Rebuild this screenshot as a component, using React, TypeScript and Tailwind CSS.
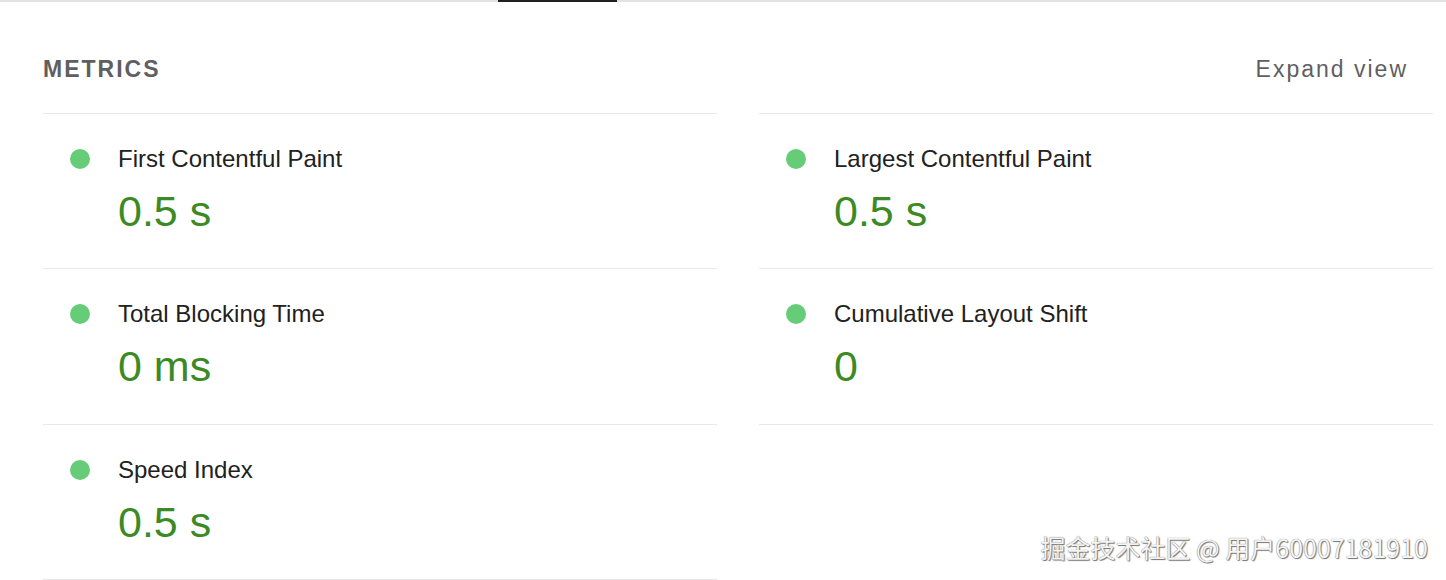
// Lighthouse-style metrics summary

type Metric = {
    label: string;
    value: string;
};

const metrics: Metric[] = [
    { label: "First Contentful Paint", value: "0.5 s" },
    { label: "Largest Contentful Paint", value: "0.5 s" },
    { label: "Total Blocking Time", value: "0 ms" },
    { label: "Cumulative Layout Shift", value: "0" },
    { label: "Speed Index", value: "0.5 s" },
];

function MetricItem({ metric, first, last }: { metric: Metric; first: boolean; last: boolean }) {
    return (
        <div
            className={
                "flex border-b border-[#e8e8e8] pl-[27px] pt-[31px] " +
                (first ? "border-t " : "") +
                (last ? "h-[155px]" : "h-[156px]")
            }
        >
            <span className="mt-[4px] h-[20px] w-[20px] shrink-0 rounded-full bg-[#66cc77]" />
            <div className="ml-[28px] flex flex-col">
                <span className="text-[24px] leading-[28px] text-[#212121]">
                    {metric.label}
                </span>
                <span className="mt-[14px] text-[43px] leading-[48px] text-[#3c8a23]">
                    {metric.value}
                </span>
            </div>
        </div>
    );
}

export default function App() {
    return (
        <div className="relative h-[580px] w-full overflow-hidden bg-white font-['Liberation_Sans',Arial,sans-serif]">
            {/* Tab bar underline */}
            <div className="flex h-[2px] w-full bg-[#e2e2e2]">
                <div className="ml-[498px] h-[2px] w-[119px] bg-[#202020]" />
            </div>

            <div className="pl-[43px] pr-[13px]">
                {/* Header */}
                <div className="flex items-center justify-between pr-[25px] pt-[54px] pb-[31px]">
                    <span className="text-[23px] font-bold leading-[26px] tracking-[2px] text-[#5f5f5f]">
                        METRICS
                    </span>
                    <span className="text-[23px] leading-[26px] tracking-[2px] text-[#5f5f5f]">
                        Expand view
                    </span>
                </div>

                {/* Metrics grid */}
                <div className="grid grid-cols-2 gap-x-[42px]">
                    {metrics.map((m, i) => (
                        <MetricItem
                            key={m.label}
                            metric={m}
                            first={i < 2}
                            last={i === metrics.length - 1}
                        />
                    ))}
                </div>
            </div>

            {/* Watermark */}
            <div className="absolute bottom-[18px] right-[18px] font-['Noto_Sans_CJK_SC',sans-serif] text-[25px] leading-[30px] text-[#f4f4f4] [text-shadow:0_0_1px_#555,1px_1px_1px_#777]">
                掘金技术社区 @ 用户60007181910
            </div>
        </div>
    );
}
